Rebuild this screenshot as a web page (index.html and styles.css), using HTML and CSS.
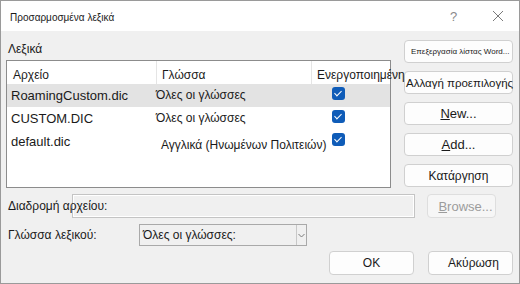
FILE: index.html
```html
<!DOCTYPE html>
<html lang="el">
<head>
    <meta charset="UTF-8">
    <meta name="viewport" content="width=device-width, initial-scale=1.0">
    <title>Προσαρμοσμένα λεξικά</title>
    <link rel="stylesheet" href="styles.css">
</head>
<body>
    <div class="dialog">
        <div class="titlebar">
            <span class="title">Προσαρμοσμένα λεξικά</span>
            <span class="help">?</span>
            <span class="close">
                <svg width="12" height="12" viewBox="0 0 12 12"><path d="M1 1 L11 11 M11 1 L1 11" stroke="#7a7a7a" stroke-width="1" fill="none"/></svg>
            </span>
        </div>

        <div class="content">
            <div class="top">
                <div class="dicts">
                    <div class="group-label">Λεξικά</div>
                    <div class="listbox">
                        <div class="row header">
                            <div class="cell c1">Αρχείο</div>
                            <div class="cell c2 sep">Γλώσσα</div>
                            <div class="cell c3 sep">Ενεργοποιημένη</div>
                        </div>
                        <div class="row selected">
                            <div class="cell c1">RoamingCustom.dic</div>
                            <div class="cell c2 lang">Όλες οι γλώσσες</div>
                            <div class="cell c3"><span class="check"></span></div>
                        </div>
                        <div class="row">
                            <div class="cell c1">CUSTOM.DIC</div>
                            <div class="cell c2 lang">Όλες οι γλώσσες</div>
                            <div class="cell c3"><span class="check"></span></div>
                        </div>
                        <div class="row">
                            <div class="cell c1">default.dic</div>
                            <div class="cell c2 lang shifted">Αγγλικά (Ηνωμένων Πολιτειών)</div>
                            <div class="cell c3"><span class="check"></span></div>
                        </div>
                    </div>
                </div>

                <div class="side-buttons">
                    <button class="btn tiny">Επεξεργασία λίστας Word...</button>
                    <button class="btn wide-text">Αλλαγή προεπιλογής</button>
                    <button class="btn big"><u>N</u>ew...</button>
                    <button class="btn big"><u>A</u>dd...</button>
                    <button class="btn">Κατάργηση</button>
                </div>
            </div>

            <div class="path-row">
                <span class="label">Διαδρομή αρχείου:</span>
                <div class="path-input"></div>
                <button class="btn disabled"><u>B</u>rowse...</button>
            </div>

            <div class="lang-row">
                <span class="label">Γλώσσα λεξικού:</span>
                <div class="combo">
                    <span class="combo-text">Όλες οι γλώσσες:</span>
                    <span class="combo-arrow">
                        <svg width="7" height="5" viewBox="0 0 7 5"><path d="M0.5 1 L3.5 4 L6.5 1" stroke="#7a7a7a" stroke-width="1" fill="none"/></svg>
                    </span>
                </div>
            </div>

            <div class="actions">
                <button class="btn action">OK</button>
                <button class="btn action">Ακύρωση</button>
            </div>
        </div>
    </div>
</body>
</html>
```

FILE: styles.css
```css
* {
    box-sizing: border-box;
}

body {
    margin: 0;
    font-family: 'Liberation Sans', Arial, sans-serif;
    font-size: 12px;
    color: #1a1a1a;
    background: #f0f0f0;
}

.dialog {
    width: 520px;
    height: 284px;
    border: 1px solid #9a9a9a;
    background: #f0f0f0;
    overflow: hidden;
}

.titlebar {
    height: 30px;
    background: #ffffff;
    display: flex;
    align-items: center;
    padding-left: 9px;
}

.title {
    flex: 1;
    font-size: 10px;
    padding-top: 2px;
}

.help {
    color: #8a8a8a;
    font-size: 13px;
    width: 20px;
    margin-left: 2px;
    margin-right: 22px;
}

.close {
    display: flex;
    width: 12px;
    margin-right: 15px;
}

.content {
    padding: 9px 6px 0 5px;
}

.top {
    display: flex;
    gap: 13px;
}

.dicts {
    width: 385px;
    flex-shrink: 0;
}

.group-label {
    height: 20px;
    padding-left: 2px;
    padding-top: 2px;
}

.listbox {
    height: 128px;
    border: 1px solid #8c8c8c;
    background: #ffffff;
}

.row {
    display: flex;
    height: 23px;
    font-size: 13px;
    line-height: 23px;
}

.row.header {
    font-size: 12px;
    line-height: 29px;
}

.row.selected {
    background: #e3e3e3;
}

.cell {
    white-space: nowrap;
}

.c1 {
    width: 149px;
    flex-shrink: 0;
    padding-left: 4px;
}

.c2 {
    width: 155px;
    flex-shrink: 0;
}

.c3 {
    flex: 1;
    min-width: 0;
    padding-left: 21px;
}

.header .c1 {
    padding-left: 6px;
}

.header .c2 {
    padding-left: 5px;
}

.header .c3 {
    padding-left: 5px;
    overflow: visible;
    position: relative;
    z-index: 1;
}

.sep {
    border-left: 1px solid #e5e5e5;
}

.lang {
    font-size: 12px;
}

.shifted {
    padding-left: 5px;
    padding-top: 4px;
}

.check {
    display: inline-block;
    width: 13px;
    height: 13px;
    margin-top: 3px;
    border-radius: 3px;
    background: #0f5cb8;
    vertical-align: top;
    position: relative;
}

.check::after {
    content: '';
    position: absolute;
    left: 4px;
    top: 2px;
    width: 3px;
    height: 6px;
    border: solid #ffffff;
    border-width: 0 1px 1px 0;
    transform: rotate(45deg);
}

.side-buttons {
    width: 109px;
    flex-shrink: 0;
    display: flex;
    flex-direction: column;
    gap: 8px;
}

.btn {
    height: 23px;
    padding: 0;
    font-family: inherit;
    font-size: 12px;
    color: #1a1a1a;
    background: #fdfdfd;
    border: 1px solid #d0d0d0;
    border-radius: 4px;
    white-space: nowrap;
    overflow: visible;
}

.btn.tiny {
    font-size: 8px;
    padding-left: 6px;
    text-align: left;
}

.btn.wide-text {
    font-size: 11.5px;
    padding-left: 1px;
}

.btn.big {
    font-size: 13px;
}

.btn.disabled {
    color: #9c9c9c;
    background: #f6f6f6;
    border-color: #dedede;
    font-size: 13px;
    padding-left: 8px;
}

.label {
    padding-left: 2px;
    white-space: nowrap;
    position: relative;
    z-index: 1;
}

.path-row {
    display: flex;
    align-items: center;
    margin-top: 6px;
    height: 24px;
}

.path-row .label {
    width: 66px;
    flex-shrink: 0;
}

.path-input {
    width: 343px;
    height: 24px;
    flex-shrink: 0;
    border: 1px solid #c4c4c4;
    box-shadow: inset 0 0 0 1px #ffffff;
    background: #f0f0f0;
}

.path-row .btn {
    width: 69px;
    height: 24px;
    margin-left: 12px;
}

.lang-row {
    display: flex;
    align-items: center;
    margin-top: 6px;
    height: 22px;
}

.lang-row .label {
    width: 133px;
    flex-shrink: 0;
}

.combo {
    width: 168px;
    height: 22px;
    border: 1px solid #a9a9a9;
    display: flex;
    align-items: center;
}

.combo-text {
    flex: 1;
    padding-left: 3px;
}

.combo-arrow {
    width: 10px;
    height: 20px;
    border-left: 1px solid #c8c8c8;
    display: flex;
    align-items: center;
    justify-content: center;
}

.actions {
    display: flex;
    justify-content: flex-end;
    gap: 14px;
    margin-top: 5px;
}

.action {
    width: 85px;
    height: 24px;
    font-size: 12px;
}

.action + .action {
    padding-left: 6px;
}
```
